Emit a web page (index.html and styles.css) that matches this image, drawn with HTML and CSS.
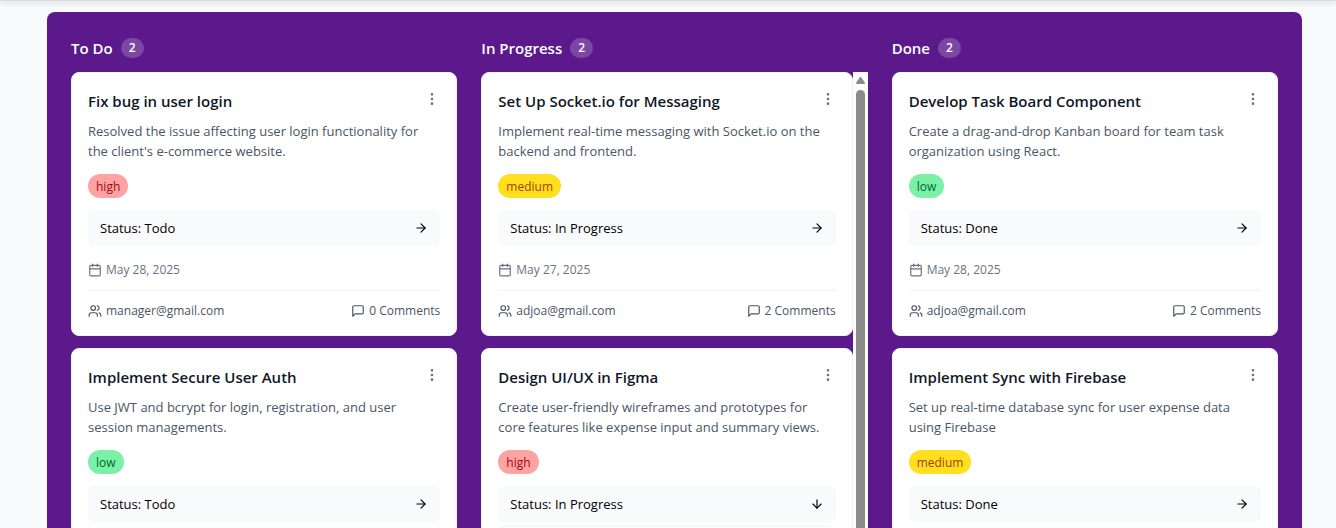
FILE: index.html
```html
<!DOCTYPE html>
<html lang="en">
<head>
<meta charset="utf-8">
<title>Task Board</title>
<link rel="stylesheet" href="styles.css">
</head>
<body>
<svg class="sprite" aria-hidden="true">
  <symbol id="dots" viewBox="0 0 24 24"><circle cx="12" cy="12" r="1"/><circle cx="12" cy="5" r="1"/><circle cx="12" cy="19" r="1"/></symbol>
  <symbol id="right" viewBox="0 0 24 24"><path d="M5 12h14"/><path d="m12 5 7 7-7 7"/></symbol>
  <symbol id="down" viewBox="0 0 24 24"><path d="M12 5v14"/><path d="m19 12-7 7-7-7"/></symbol>
  <symbol id="calendar" viewBox="0 0 24 24"><path d="M8 2v4"/><path d="M16 2v4"/><rect width="18" height="18" x="3" y="4" rx="2"/><path d="M3 10h18"/></symbol>
  <symbol id="users" viewBox="0 0 24 24"><path d="M16 21v-2a4 4 0 0 0-4-4H6a4 4 0 0 0-4 4v2"/><circle cx="9" cy="7" r="4"/><path d="M22 21v-2a4 4 0 0 0-3-3.87"/><path d="M16 3.13a4 4 0 0 1 0 7.75"/></symbol>
  <symbol id="comment" viewBox="0 0 24 24"><path d="M21 15a2 2 0 0 1-2 2H7l-4 4V5a2 2 0 0 1 2-2h14a2 2 0 0 1 2 2z"/></symbol>
</svg>
<header class="topbar"></header>
<main class="board">
  <section class="column">
    <h2 class="column-title">To Do <span class="count">2</span></h2>
    <div class="lane">
      <div class="cards">
        <article class="card">
          <div class="card-head"><h3 class="card-title">Fix bug in user login</h3><button class="more" aria-label="Task options"><svg class="icon"><use href="#dots"/></svg></button></div>
          <p class="desc">Resolved the issue affecting user login functionality for the client's e-commerce website.</p>
          <span class="tag high">high</span>
          <button class="status">Status: Todo <svg class="icon small"><use href="#right"/></svg></button>
          <div class="date"><svg class="icon small"><use href="#calendar"/></svg>May 28, 2025</div>
          <footer class="card-foot"><span class="meta"><svg class="icon small"><use href="#users"/></svg>manager@gmail.com</span><button class="meta"><svg class="icon small"><use href="#comment"/></svg>0 Comments</button></footer>
        </article>
        <article class="card">
          <div class="card-head"><h3 class="card-title">Implement Secure User Auth</h3><button class="more" aria-label="Task options"><svg class="icon"><use href="#dots"/></svg></button></div>
          <p class="desc">Use JWT and bcrypt for login, registration, and user session managements.</p>
          <span class="tag low">low</span>
          <button class="status">Status: Todo <svg class="icon small"><use href="#right"/></svg></button>
        </article>
      </div>
    </div>
  </section>
  <section class="column">
    <h2 class="column-title">In Progress <span class="count">2</span></h2>
    <div class="lane">
      <div class="cards">
        <article class="card">
          <div class="card-head"><h3 class="card-title">Set Up Socket.io for Messaging</h3><button class="more" aria-label="Task options"><svg class="icon"><use href="#dots"/></svg></button></div>
          <p class="desc">Implement real-time messaging with Socket.io on the backend and frontend.</p>
          <span class="tag medium">medium</span>
          <button class="status">Status: In Progress <svg class="icon small"><use href="#right"/></svg></button>
          <div class="date"><svg class="icon small"><use href="#calendar"/></svg>May 27, 2025</div>
          <footer class="card-foot"><span class="meta"><svg class="icon small"><use href="#users"/></svg>adjoa@gmail.com</span><button class="meta"><svg class="icon small"><use href="#comment"/></svg>2 Comments</button></footer>
        </article>
        <article class="card">
          <div class="card-head"><h3 class="card-title">Design UI/UX in Figma</h3><button class="more" aria-label="Task options"><svg class="icon"><use href="#dots"/></svg></button></div>
          <p class="desc">Create user-friendly wireframes and prototypes for core features like expense input and summary views.</p>
          <span class="tag high">high</span>
          <div class="picker">
            <button class="status" aria-expanded="true">Status: In Progress <svg class="icon small"><use href="#down"/></svg></button>
            <div class="menu"></div>
          </div>
        </article>
      </div>
      <div class="scrollbar"><svg class="scroll-arrow" viewBox="0 0 9 7"><path d="M4.500 1 8 6H1z"/></svg><span class="thumb"></span></div>
    </div>
  </section>
  <section class="column">
    <h2 class="column-title">Done <span class="count">2</span></h2>
    <div class="lane">
      <div class="cards">
        <article class="card">
          <div class="card-head"><h3 class="card-title">Develop Task Board Component</h3><button class="more" aria-label="Task options"><svg class="icon"><use href="#dots"/></svg></button></div>
          <p class="desc">Create a drag-and-drop Kanban board for team task organization using React.</p>
          <span class="tag low">low</span>
          <button class="status">Status: Done <svg class="icon small"><use href="#right"/></svg></button>
          <div class="date"><svg class="icon small"><use href="#calendar"/></svg>May 28, 2025</div>
          <footer class="card-foot"><span class="meta"><svg class="icon small"><use href="#users"/></svg>adjoa@gmail.com</span><button class="meta"><svg class="icon small"><use href="#comment"/></svg>2 Comments</button></footer>
        </article>
        <article class="card">
          <div class="card-head"><h3 class="card-title">Implement Sync with Firebase</h3><button class="more" aria-label="Task options"><svg class="icon"><use href="#dots"/></svg></button></div>
          <p class="desc">Set up real-time database sync for user expense data using Firebase</p>
          <span class="tag medium">medium</span>
          <button class="status">Status: Done <svg class="icon small"><use href="#right"/></svg></button>
        </article>
      </div>
    </div>
  </section>
</main>
</body>
</html>
```
FILE: styles.css
```css
* { box-sizing: border-box; }
body {
  margin: 0;
  height: 100vh;
  overflow: hidden;
  background: #f9fafb;
  color: #101828;
  font-family: "Segoe UI", "Open Sans", "Noto Sans", sans-serif;
  font-size: 14px;
  line-height: 20px;
}
h2, h3, p { margin: 0; }
button {
  border: 0;
  padding: 0;
  background: none;
  color: inherit;
  font: inherit;
  cursor: pointer;
}
.sprite { display: none; }
.icon {
  display: block;
  flex: none;
  width: 16px;
  height: 16px;
  fill: none;
  stroke: currentColor;
  stroke-width: 2;
  stroke-linecap: round;
  stroke-linejoin: round;
}
.icon.small { width: 14px; height: 14px; }
.topbar {
  height: 1px;
  background: #d9dbdd;
  box-shadow: 0 2px 4px rgba(0, 0, 0, 0.2), 0 1px 6px rgba(0, 0, 0, 0.15);
}
.board {
  display: grid;
  grid-template-columns: repeat(3, minmax(0, 1fr));
  gap: 24px;
  margin: 11px 34px 0 47px;
  padding: 24px;
  border-radius: 8px;
  background: #5b198b;
}
.column { display: flex; flex-direction: column; gap: 12px; }
.column-title {
  display: flex;
  align-items: center;
  gap: 8px;
  color: #fff;
  font-size: 15px;
  font-weight: 600;
  line-height: 24px;
}
.count {
  padding: 2px 8px;
  border-radius: 12px;
  background: rgba(255, 255, 255, 0.2);
  font-size: 12px;
  line-height: 16px;
}
.lane { display: flex; flex: 1; }
.cards {
  display: flex;
  flex: 1;
  flex-direction: column;
  gap: 12px;
  min-width: 0;
}
.card {
  padding: 16px;
  border: 1px solid #f3f4f6;
  border-radius: 8px;
  background: #fff;
}
.card:last-child { flex: 1; }
.card-head {
  display: flex;
  align-items: flex-start;
  justify-content: space-between;
  margin-bottom: 8px;
}
.card-title { font-size: 15px; font-weight: 600; line-height: 24px; }
.more { padding: 2px 0; color: #6a7282; }
.desc { margin-bottom: 13px; color: #4a5565; font-size: 13px; }
.tag {
  display: block;
  width: fit-content;
  margin-bottom: 12px;
  padding: 5px 8px 3px;
  border-radius: 12px;
  font-size: 12px;
  line-height: 16px;
}
.high { background: #ffa2a2; color: #9f0712; }
.medium { background: #ffdf20; color: #a63f00; }
.low { background: #7bf1a8; color: #016630; }
.status {
  display: flex;
  align-items: center;
  justify-content: space-between;
  width: 100%;
  padding: 8px 12px;
  border-radius: 6px;
  background: #f9fafb;
  color: #000;
  font-size: 13px;
}
.picker { position: relative; }
.menu {
  position: absolute;
  top: calc(100% + 4px);
  left: 0;
  right: 0;
  height: 108px;
  border: 1px solid #f3f4f6;
  border-radius: 6px;
  background: #fff;
}
.date, .meta {
  display: flex;
  align-items: center;
  gap: 4px;
  color: #6a7282;
  font-size: 12px;
  line-height: 16px;
}
.date { padding: 16px 0 12px; }
.card-foot {
  display: flex;
  justify-content: space-between;
  padding-top: 12px;
  border-top: 1px solid #f3f4f6;
}
.meta { color: #4a5565; }
.scrollbar {
  display: flex;
  flex-direction: column;
  align-items: center;
  gap: 6px;
  width: 15px;
  padding-top: 5px;
  background: #fcfcfc;
}
.scroll-arrow {
  width: 9px;
  height: 7px;
  fill: #8b8b8b;
  stroke: #8b8b8b;
  stroke-width: 2;
  stroke-linejoin: round;
}
.thumb { flex: 1; width: 9px; border-radius: 5px; background: #8b8b8b; }
```
